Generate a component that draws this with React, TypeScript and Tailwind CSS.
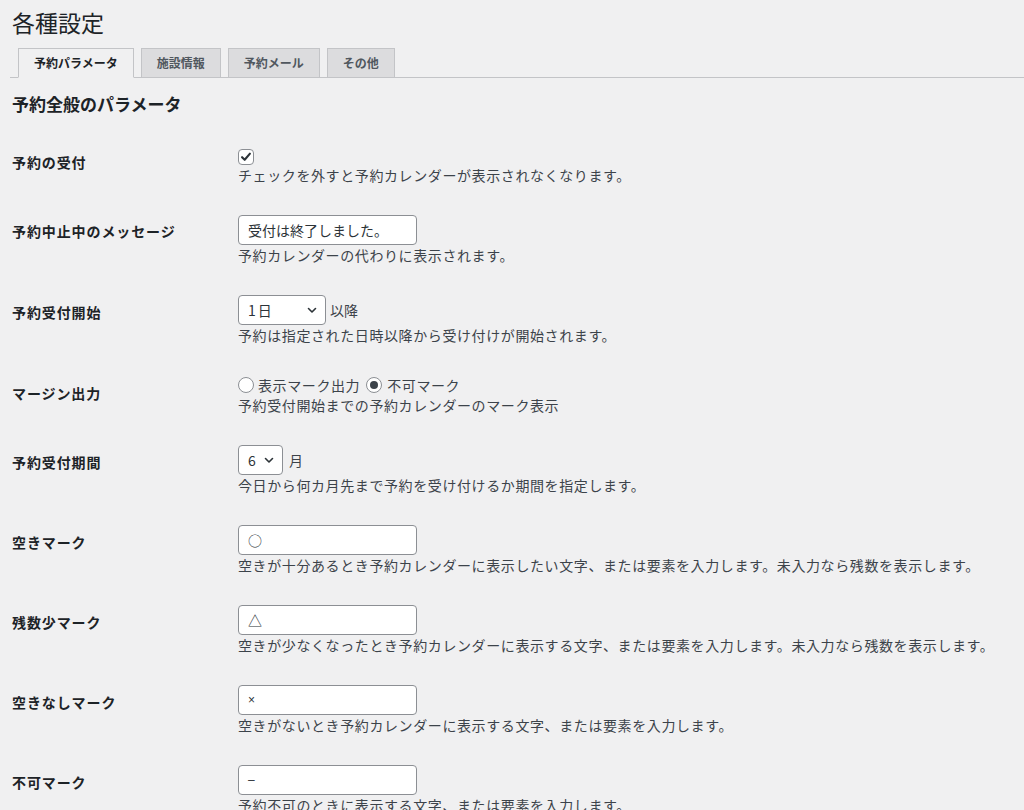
import React from 'react';

const Check = () => (
    <span className="flex h-[16px] w-[16px] items-center justify-center rounded-[4px] border border-[#8c8f94] bg-white">
        <svg viewBox="0 0 16 16" className="h-[14px] w-[14px]">
            <path d="M3.5 8.2l3 3 6-7" fill="none" stroke="#2c3338" strokeWidth="2.4" strokeLinecap="round" strokeLinejoin="round" />
        </svg>
    </span>
);

const Radio: React.FC<{ checked?: boolean }> = ({ checked }) => (
    <span className="flex h-[16px] w-[16px] shrink-0 items-center justify-center rounded-full border border-[#8c8f94] bg-white">
        {checked && <span className="h-[8px] w-[8px] rounded-full bg-[#3c434a]" />}
    </span>
);

const TextBox: React.FC<{ value: string; small?: boolean }> = ({ value, small }) => (
    <div className="flex h-[30px] w-[179px] items-center rounded-[4px] border border-[#8c8f94] bg-white px-[9px] text-[14px] text-[#2c3338]">
        <span className={small ? "font-['Liberation_Sans',sans-serif] text-[12px]" : ''}>{value}</span>
    </div>
);

const SelectBox: React.FC<{ value: string; w: string }> = ({ value, w }) => (
    <div className={`flex h-[30px] items-center justify-between rounded-[4px] border border-[#8c8f94] bg-white pl-[9px] pr-[7px] text-[14px] text-[#2c3338] ${w}`}>
        <span className="tracking-[2px]">{value}</span>
        <svg viewBox="0 0 12 12" className="h-[12px] w-[12px]">
            <path d="M2.5 4.5l3.5 3.5 3.5-3.5" fill="none" stroke="#2c3338" strokeWidth="1.6" strokeLinecap="round" strokeLinejoin="round" />
        </svg>
    </div>
);

const Row: React.FC<{ label: string; labelClass: string; desc: string; children: React.ReactNode }> = ({ label, labelClass, desc, children }) => (
    <div className="flex py-[15px]">
        <div className="w-[226px] shrink-0">
            <div className={`text-[14px] font-bold leading-[20px] tracking-[0.9px] text-[#1d2327] ${labelClass}`}>{label}</div>
        </div>
        <div className="flex flex-col">
            {children}
            <p className="text-[14px] leading-[20px] tracking-[0.6px] text-[#3c434a]">{desc}</p>
        </div>
    </div>
);

const tabs = ['予約パラメータ', '施設情報', '予約メール', 'その他'];

export default function App() {
    return (
        <div className="min-h-[810px] overflow-hidden bg-[#f0f0f1] px-[12px] pt-[8px] font-['Noto_Sans_CJK_JP','Noto_Sans',sans-serif] text-[#1d2327]">
            <h1 className="text-[23px] font-normal leading-[29px]">各種設定</h1>

            <nav className="-ml-[2px] -mr-[12px] mt-[11px] flex items-end gap-[7px] border-b border-[#c3c4c7] pl-[8px]">
                {tabs.map((t, i) => (
                    <div
                        key={t}
                        className={
                            i === 0
                                ? '-mb-px flex h-[30px] items-center border border-[#c3c4c7] border-b-[#f0f0f1] bg-[#f0f0f1] px-[15px] text-[12px] font-bold text-[#1d2327]'
                                : '-mb-px flex h-[30px] items-center border border-[#c3c4c7] bg-[#dcdcde] px-[15px] text-[12px] font-bold text-[#50575e]'
                        }
                    >
                        {t}
                    </div>
                ))}
            </nav>

            <h2 className="mt-[14px] text-[17px] font-bold leading-[24px]">予約全般のパラメータ</h2>

            <div className="mt-[18px]">
                <Row label="予約の受付" labelClass="mt-[3px]" desc="チェックを外すと予約カレンダーが表示されなくなります。">
                    <Check />
                </Row>
                <Row label="予約中止中のメッセージ" labelClass="mt-[6px]" desc="予約カレンダーの代わりに表示されます。">
                    <TextBox value="受付は終了しました。" />
                </Row>
                <Row label="予約受付開始" labelClass="mt-[7px]" desc="予約は指定された日時以降から受け付けが開始されます。">
                    <div className="flex items-center">
                        <SelectBox value="1日" w="w-[88px]" />
                        <span className="ml-[4px] text-[14px] text-[#3c434a]">以降</span>
                    </div>
                </Row>
                <Row label="マージン出力" labelClass="mt-[8px]" desc="予約受付開始までの予約カレンダーのマーク表示">
                    <div className="flex h-[20px] items-center text-[14px] tracking-[0.6px] text-[#3c434a]">
                        <Radio />
                        <span className="ml-[4px]">表示マーク出力</span>
                        <span className="ml-[6px]"><Radio checked /></span>
                        <span className="ml-[5px]">不可マーク</span>
                    </div>
                </Row>
                <Row label="予約受付期間" labelClass="mt-[7px]" desc="今日から何カ月先まで予約を受け付けるか期間を指定します。">
                    <div className="flex items-center">
                        <SelectBox value="6" w="w-[45px]" />
                        <span className="ml-[6px] text-[14px] text-[#3c434a]">月</span>
                    </div>
                </Row>
                <Row label="空きマーク" labelClass="mt-[7px]" desc="空きが十分あるとき予約カレンダーに表示したい文字、または要素を入力します。未入力なら残数を表示します。">
                    <TextBox value="○" />
                </Row>
                <Row label="残数少マーク" labelClass="mt-[7px]" desc="空きが少なくなったとき予約カレンダーに表示する文字、または要素を入力します。未入力なら残数を表示します。">
                    <TextBox value="△" />
                </Row>
                <Row label="空きなしマーク" labelClass="mt-[7px]" desc="空きがないとき予約カレンダーに表示する文字、または要素を入力します。">
                    <TextBox value="×" small />
                </Row>
                <Row label="不可マーク" labelClass="mt-[7px]" desc="予約不可のときに表示する文字、または要素を入力します。">
                    <TextBox value="–" small />
                </Row>
            </div>
        </div>
    );
}
